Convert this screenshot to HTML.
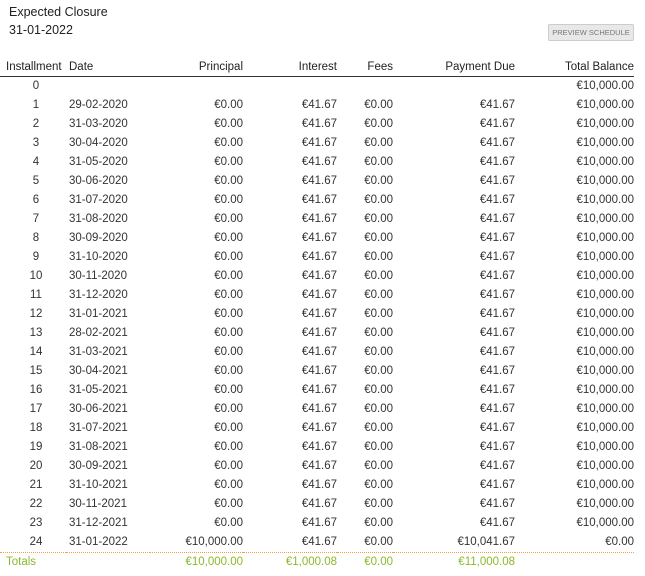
<!DOCTYPE html>
<html><head><meta charset="utf-8"><style>
body{margin:0;background:#fff;font-family:"Liberation Sans",sans-serif;color:#333;font-size:11.5px;}
.h{position:absolute;left:9px;font-size:12.5px;color:#222}
.btn{position:absolute;left:548px;top:24px;width:84px;height:15px;background:#e8e8e8;border:1px solid #ccc;border-radius:2px;font-size:7.5px;color:#777;text-align:center;line-height:15px;box-sizing:content-box}
table{position:absolute;left:0;top:58px;border-collapse:collapse;table-layout:fixed;width:634px}
td,th{height:19px;padding:0;font-weight:normal;text-align:right;white-space:nowrap;line-height:19px}
th{color:#222;height:18px;line-height:18px;border-bottom:1px solid #333}
td:nth-child(1),th:nth-child(1){text-align:center;padding-left:6px}
th:nth-child(1){text-align:left;padding-left:6px}
td:nth-child(2),th:nth-child(2){text-align:left;padding-left:3px}
tr.last td{border-bottom:1px dotted #f0a040}
tr.tot td{color:#8bb92b}
tr.tot td:nth-child(1){text-align:left;padding-left:6px}
</style></head><body>
<div class="h" style="top:5px">Expected Closure</div>
<div class="h" style="top:23px">31-01-2022</div>
<div class="btn">PREVIEW SCHEDULE</div>
<table>
<colgroup><col style="width:66px"><col style="width:84px"><col style="width:93px"><col style="width:94px"><col style="width:56px"><col style="width:122px"><col style="width:119px"></colgroup>
<tr><th>Installment</th><th>Date</th><th>Principal</th><th>Interest</th><th>Fees</th><th>Payment Due</th><th>Total Balance</th></tr>
<tr><td>0</td><td></td><td></td><td></td><td></td><td></td><td>€10,000.00</td></tr>
<tr><td>1</td><td>29-02-2020</td><td>€0.00</td><td>€41.67</td><td>€0.00</td><td>€41.67</td><td>€10,000.00</td></tr>
<tr><td>2</td><td>31-03-2020</td><td>€0.00</td><td>€41.67</td><td>€0.00</td><td>€41.67</td><td>€10,000.00</td></tr>
<tr><td>3</td><td>30-04-2020</td><td>€0.00</td><td>€41.67</td><td>€0.00</td><td>€41.67</td><td>€10,000.00</td></tr>
<tr><td>4</td><td>31-05-2020</td><td>€0.00</td><td>€41.67</td><td>€0.00</td><td>€41.67</td><td>€10,000.00</td></tr>
<tr><td>5</td><td>30-06-2020</td><td>€0.00</td><td>€41.67</td><td>€0.00</td><td>€41.67</td><td>€10,000.00</td></tr>
<tr><td>6</td><td>31-07-2020</td><td>€0.00</td><td>€41.67</td><td>€0.00</td><td>€41.67</td><td>€10,000.00</td></tr>
<tr><td>7</td><td>31-08-2020</td><td>€0.00</td><td>€41.67</td><td>€0.00</td><td>€41.67</td><td>€10,000.00</td></tr>
<tr><td>8</td><td>30-09-2020</td><td>€0.00</td><td>€41.67</td><td>€0.00</td><td>€41.67</td><td>€10,000.00</td></tr>
<tr><td>9</td><td>31-10-2020</td><td>€0.00</td><td>€41.67</td><td>€0.00</td><td>€41.67</td><td>€10,000.00</td></tr>
<tr><td>10</td><td>30-11-2020</td><td>€0.00</td><td>€41.67</td><td>€0.00</td><td>€41.67</td><td>€10,000.00</td></tr>
<tr><td>11</td><td>31-12-2020</td><td>€0.00</td><td>€41.67</td><td>€0.00</td><td>€41.67</td><td>€10,000.00</td></tr>
<tr><td>12</td><td>31-01-2021</td><td>€0.00</td><td>€41.67</td><td>€0.00</td><td>€41.67</td><td>€10,000.00</td></tr>
<tr><td>13</td><td>28-02-2021</td><td>€0.00</td><td>€41.67</td><td>€0.00</td><td>€41.67</td><td>€10,000.00</td></tr>
<tr><td>14</td><td>31-03-2021</td><td>€0.00</td><td>€41.67</td><td>€0.00</td><td>€41.67</td><td>€10,000.00</td></tr>
<tr><td>15</td><td>30-04-2021</td><td>€0.00</td><td>€41.67</td><td>€0.00</td><td>€41.67</td><td>€10,000.00</td></tr>
<tr><td>16</td><td>31-05-2021</td><td>€0.00</td><td>€41.67</td><td>€0.00</td><td>€41.67</td><td>€10,000.00</td></tr>
<tr><td>17</td><td>30-06-2021</td><td>€0.00</td><td>€41.67</td><td>€0.00</td><td>€41.67</td><td>€10,000.00</td></tr>
<tr><td>18</td><td>31-07-2021</td><td>€0.00</td><td>€41.67</td><td>€0.00</td><td>€41.67</td><td>€10,000.00</td></tr>
<tr><td>19</td><td>31-08-2021</td><td>€0.00</td><td>€41.67</td><td>€0.00</td><td>€41.67</td><td>€10,000.00</td></tr>
<tr><td>20</td><td>30-09-2021</td><td>€0.00</td><td>€41.67</td><td>€0.00</td><td>€41.67</td><td>€10,000.00</td></tr>
<tr><td>21</td><td>31-10-2021</td><td>€0.00</td><td>€41.67</td><td>€0.00</td><td>€41.67</td><td>€10,000.00</td></tr>
<tr><td>22</td><td>30-11-2021</td><td>€0.00</td><td>€41.67</td><td>€0.00</td><td>€41.67</td><td>€10,000.00</td></tr>
<tr><td>23</td><td>31-12-2021</td><td>€0.00</td><td>€41.67</td><td>€0.00</td><td>€41.67</td><td>€10,000.00</td></tr>
<tr class="last"><td>24</td><td>31-01-2022</td><td>€10,000.00</td><td>€41.67</td><td>€0.00</td><td>€10,041.67</td><td>€0.00</td></tr>
<tr class="tot"><td>Totals</td><td></td><td>€10,000.00</td><td>€1,000.08</td><td>€0.00</td><td>€11,000.08</td><td></td></tr>
</table>
</body></html>
